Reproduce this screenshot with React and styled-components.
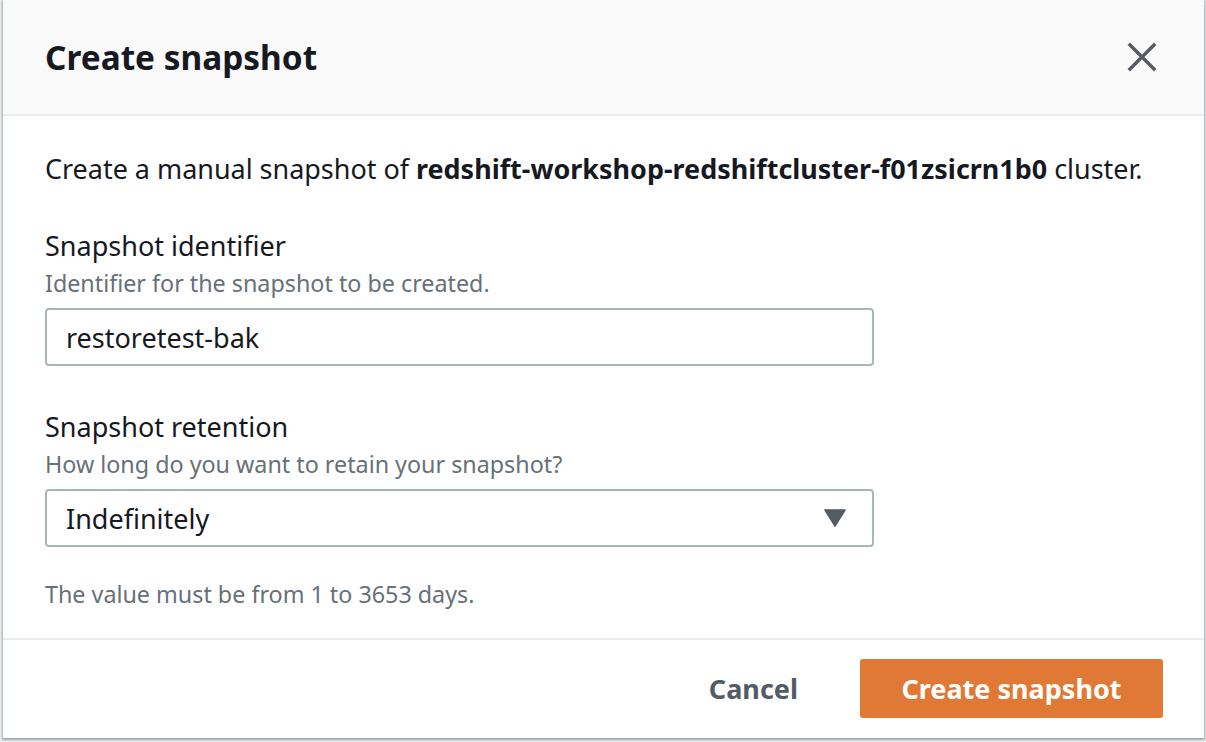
import React from "react";
import styled, { createGlobalStyle } from "styled-components";

const GlobalStyle = createGlobalStyle`
  html, body {
    margin: 0;
    padding: 0;
    background: #eef0f0;
    font-family: "Noto Sans", "Open Sans", Arial, sans-serif;
    color: #16191f;
  }
`;

function CloseIcon() {
  return (
    <svg width="30" height="30" viewBox="0 0 30 30">
      <path d="M3 3 L27 27 M27 3 L3 27" stroke="#545b64" strokeWidth="3.4" strokeLinecap="square" />
    </svg>
  );
}

function CaretIcon() {
  return (
    <svg width="22" height="18" viewBox="0 0 22 18">
      <path d="M1 1 H21 L11 17 Z" fill="#545b64" stroke="#545b64" strokeWidth="1.5" strokeLinejoin="round" />
    </svg>
  );
}

function App() {
  return (
    <>
      <GlobalStyle />
      <Page>
        <Modal>
          <Header>
            <Title>Create snapshot</Title>
            <CloseButton aria-label="Close">
              <CloseIcon />
            </CloseButton>
          </Header>
          <Body>
            <Intro>
              Create a manual snapshot of{" "}
              <strong>redshift-workshop-redshiftcluster-f01zsicrn1b0</strong> cluster.
            </Intro>
            <Field>
              <Label>Snapshot identifier</Label>
              <Hint>Identifier for the snapshot to be created.</Hint>
              <Input defaultValue="restoretest-bak" />
            </Field>
            <Field>
              <Label>Snapshot retention</Label>
              <Hint>How long do you want to retain your snapshot?</Hint>
              <Select>
                <span>Indefinitely</span>
                <CaretIcon />
              </Select>
            </Field>
            <Constraint>The value must be from 1 to 3653 days.</Constraint>
          </Body>
          <Footer>
            <LinkButton>Cancel</LinkButton>
            <PrimaryButton>Create snapshot</PrimaryButton>
          </Footer>
        </Modal>
      </Page>
    </>
  );
}

const Page = styled.div`
  width: 1206px;
  height: 742px;
  overflow: hidden;
`;

const Modal = styled.div`
  margin-left: 3px;
  width: 1201px;
  height: 738px;
  background: #fff;
  display: flex;
  flex-direction: column;
  box-shadow: 0 1px 2px 1px rgba(0, 28, 36, 0.35);
`;

const Header = styled.header`
  height: 116px;
  box-sizing: border-box;
  background: #fafafa;
  border-bottom: 2px solid #eaeded;
  display: flex;
  align-items: center;
  justify-content: space-between;
  padding: 0 47px 0 42px;
`;

const Title = styled.h2`
  margin: 0;
  font-size: 33.4px;
  font-weight: 700;
  line-height: 40px;
  color: #16191f;
`;

const CloseButton = styled.button`
  border: 0;
  background: none;
  padding: 0;
  display: flex;
  cursor: pointer;
`;

const Body = styled.div`
  flex: 1;
  padding: 37px 42px 0;
`;

const Intro = styled.p`
  margin: 0;
  font-size: 26.95px;
  line-height: 32px;
  strong {
    font-weight: 700;
  }
`;

const Field = styled.div`
  margin-top: 45px;
  display: flex;
  flex-direction: column;
`;

const Label = styled.div`
  font-size: 27px;
  line-height: 32px;
  color: #16191f;
`;

const Hint = styled.div`
  margin-top: 7px;
  font-size: 23.3px;
  line-height: 28px;
  color: #687078;
`;

const Input = styled.input`
  margin-top: 11px;
  width: 829px;
  height: 58px;
  box-sizing: border-box;
  border: 2px solid #aab7b8;
  border-radius: 4px;
  padding: 0 19px;
  font-family: inherit;
  font-size: 27px;
  color: #16191f;
  outline: none;
`;

const Select = styled.div`
  margin-top: 11px;
  width: 829px;
  height: 58px;
  box-sizing: border-box;
  border: 2px solid #aab7b8;
  border-radius: 4px;
  padding: 0 26px 0 19px;
  display: flex;
  align-items: center;
  justify-content: space-between;
  font-size: 27px;
  color: #16191f;
`;

const Constraint = styled.div`
  margin-top: 33px;
  font-size: 23.3px;
  line-height: 28px;
  color: #687078;
`;

const Footer = styled.footer`
  height: 100px;
  box-sizing: border-box;
  border-top: 2px solid #eaeded;
  display: flex;
  align-items: center;
  justify-content: flex-end;
  gap: 40px;
  padding: 0 41px 2px 0;
`;

const LinkButton = styled.button`
  border: 0;
  background: none;
  font-family: inherit;
  font-size: 27px;
  font-weight: 700;
  color: #545b64;
  padding: 0 22px;
  cursor: pointer;
`;

const PrimaryButton = styled.button`
  height: 59px;
  width: 303px;
  border: 0;
  border-radius: 3px;
  background: #e07936;
  color: #fff;
  font-family: inherit;
  font-size: 27px;
  font-weight: 700;
  cursor: pointer;
`;

export default App;
